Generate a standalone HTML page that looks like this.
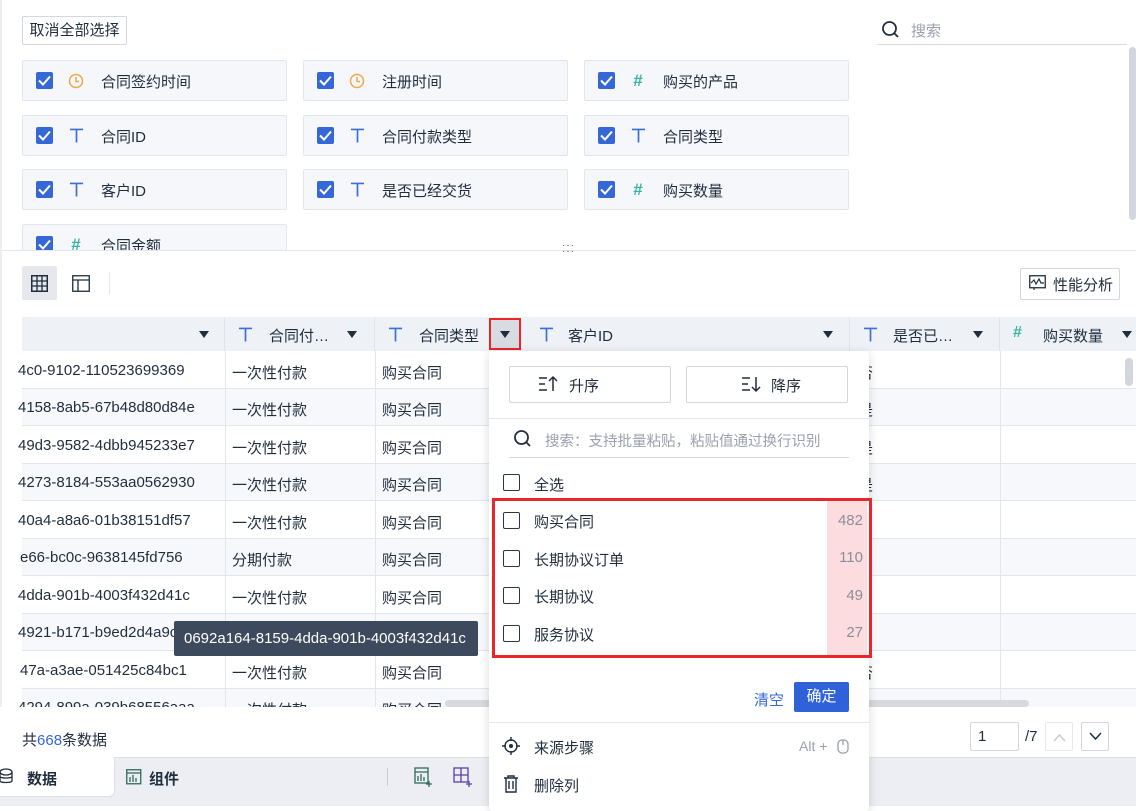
<!DOCTYPE html>
<html><head><meta charset="utf-8">
<style>
*{box-sizing:border-box;margin:0;padding:0}
body{width:1136px;height:806px;position:relative;overflow:hidden;background:#fff;font-family:"Liberation Sans","Noto Sans CJK SC",sans-serif;font-size:15px;color:#1f2d3d}
.a{position:absolute}
.card{position:absolute;width:265px;height:41px;background:#f5f7fb;border:1px solid #e3e6ec;border-radius:2px}
.cb{position:absolute;left:13px;top:11px;width:17px;height:17px;background:#3567d6;border-radius:2px}
.cb svg{position:absolute;left:2px;top:3px}
.ic{position:absolute;left:44px;top:10px;width:18px;height:20px;font-size:17px;text-align:center}
.lbl{position:absolute;left:78px;top:10px;font-size:15px}
.hash{color:#3bb5a3;font-weight:bold}
.th{position:absolute;top:317px;height:34px;background:#eef1f6;border-right:1px solid #dfe3ea;font-size:15px}
.row{position:absolute;left:22px;width:1114px;height:37.5px;border-bottom:1px solid #e3e6ec}
.cell{position:absolute;top:10px;white-space:nowrap;font-size:15px}
.arr{position:absolute;top:14px;width:0;height:0;border-left:5px solid transparent;border-right:5px solid transparent;border-top:7px solid #1f2d3d}
.vl{position:absolute;top:351px;height:356px;width:1px;background:#e3e6ec}
.chk{position:absolute;left:14px;width:17px;height:17px;border:1.5px solid #2b3648;border-radius:2px}
.ti{position:absolute}
</style></head><body>
<svg width="0" height="0" style="position:absolute"><defs><symbol id="T" viewBox="0 0 16 16"><path d="M1 1.5h14M8 1.5v14" stroke="#3b6fd8" stroke-width="1.8" fill="none"/></symbol></defs></svg>
<div class="a" style="left:0;top:0;width:2px;height:757px;background:#eceef2"></div>
<!-- top panel -->
<div class="a" style="left:22px;top:16px;width:105px;height:29px;border:1px solid #d3d7de;border-radius:2px;font-size:15px;line-height:27px;text-align:center">取消全部选择</div>
<svg class="a" style="left:881px;top:20px" width="20" height="20" viewBox="0 0 20 20"><circle cx="8.5" cy="8.5" r="6.5" fill="none" stroke="#1f2d3d" stroke-width="1.8"/><line x1="13" y1="13" x2="17" y2="17" stroke="#1f2d3d" stroke-width="1.8"/></svg>
<div class="a" style="left:911px;top:20px;color:#9aa1ad">搜索</div>
<div class="a" style="left:877px;top:44px;width:250px;height:1px;background:#d9dce3"></div>
<div class="a" style="left:1129px;top:47px;width:7px;height:173px;background:#d3d6dc;border-radius:4px"></div>

<div class="card" style="left:22px;top:60px"><div class="cb"><svg width="13" height="11"><path d="M1 5.5l4 4L12 1.5" fill="none" stroke="#fff" stroke-width="2"/></svg></div><svg class="ic" viewBox="0 0 18 20"><circle cx="9" cy="10" r="6.5" fill="none" stroke="#f0a94a" stroke-width="1.5"/><path d="M9 6v4.5h3" fill="none" stroke="#f0a94a" stroke-width="1.5"/></svg><div class="lbl">合同签约时间</div></div>
<div class="card" style="left:303px;top:60px"><div class="cb"><svg width="13" height="11"><path d="M1 5.5l4 4L12 1.5" fill="none" stroke="#fff" stroke-width="2"/></svg></div><svg class="ic" viewBox="0 0 18 20"><circle cx="9" cy="10" r="6.5" fill="none" stroke="#f0a94a" stroke-width="1.5"/><path d="M9 6v4.5h3" fill="none" stroke="#f0a94a" stroke-width="1.5"/></svg><div class="lbl">注册时间</div></div>
<div class="card" style="left:584px;top:60px"><div class="cb"><svg width="13" height="11"><path d="M1 5.5l4 4L12 1.5" fill="none" stroke="#fff" stroke-width="2"/></svg></div><div class="ic hash">#</div><div class="lbl">购买的产品</div></div>

<div class="card" style="left:22px;top:115px"><div class="cb"><svg width="13" height="11"><path d="M1 5.5l4 4L12 1.5" fill="none" stroke="#fff" stroke-width="2"/></svg></div><svg class="ti" style="left:46px;top:12px" width="15" height="15"><use href="#T"/></svg><div class="lbl">合同ID</div></div>
<div class="card" style="left:303px;top:115px"><div class="cb"><svg width="13" height="11"><path d="M1 5.5l4 4L12 1.5" fill="none" stroke="#fff" stroke-width="2"/></svg></div><svg class="ti" style="left:46px;top:12px" width="15" height="15"><use href="#T"/></svg><div class="lbl">合同付款类型</div></div>
<div class="card" style="left:584px;top:115px"><div class="cb"><svg width="13" height="11"><path d="M1 5.5l4 4L12 1.5" fill="none" stroke="#fff" stroke-width="2"/></svg></div><svg class="ti" style="left:46px;top:12px" width="15" height="15"><use href="#T"/></svg><div class="lbl">合同类型</div></div>

<div class="card" style="left:22px;top:169px"><div class="cb"><svg width="13" height="11"><path d="M1 5.5l4 4L12 1.5" fill="none" stroke="#fff" stroke-width="2"/></svg></div><svg class="ti" style="left:46px;top:12px" width="15" height="15"><use href="#T"/></svg><div class="lbl">客户ID</div></div>
<div class="card" style="left:303px;top:169px"><div class="cb"><svg width="13" height="11"><path d="M1 5.5l4 4L12 1.5" fill="none" stroke="#fff" stroke-width="2"/></svg></div><svg class="ti" style="left:46px;top:12px" width="15" height="15"><use href="#T"/></svg><div class="lbl">是否已经交货</div></div>
<div class="card" style="left:584px;top:169px"><div class="cb"><svg width="13" height="11"><path d="M1 5.5l4 4L12 1.5" fill="none" stroke="#fff" stroke-width="2"/></svg></div><div class="ic hash">#</div><div class="lbl">购买数量</div></div>

<div class="a" style="left:0;top:224px;width:1136px;height:26px;overflow:hidden">
<div class="card" style="left:22px;top:0"><div class="cb"><svg width="13" height="11"><path d="M1 5.5l4 4L12 1.5" fill="none" stroke="#fff" stroke-width="2"/></svg></div><div class="ic hash">#</div><div class="lbl">合同金额</div></div>
</div>
<div class="a" style="left:2px;top:250px;width:1134px;height:1px;background:#e3e6ec"></div>
<div class="a" style="left:562px;top:243px;font-size:10px;letter-spacing:1px;color:#555;line-height:6px">···<br>···</div>

<!-- toolbar -->
<div class="a" style="left:22px;top:266px;width:35px;height:34px;background:#e6e8ee;border-radius:2px"></div>
<svg class="a" style="left:31px;top:275px" width="17" height="17"><rect x="0.75" y="0.75" width="15.5" height="15.5" fill="none" stroke="#1f2d3d" stroke-width="1.5"/><path d="M6 1v15M11 1v15M1 6h15M1 11h15" stroke="#1f2d3d" stroke-width="1.3"/></svg>
<svg class="a" style="left:72px;top:275px" width="18" height="17"><rect x="0.75" y="0.75" width="16.5" height="15.5" fill="none" stroke="#1f2d3d" stroke-width="1.3"/><path d="M1 5h16M6 5v11" stroke="#1f2d3d" stroke-width="1.3"/></svg>
<div class="a" style="left:109px;top:272px;width:1px;height:22px;background:#e3e6ec"></div>
<div class="a" style="left:1020px;top:268px;width:100px;height:32px;border:1px solid #d3d7de;border-radius:2px"></div>
<svg class="a" style="left:1029px;top:275px" width="17" height="16"><rect x="0.75" y="0.75" width="15.5" height="12" fill="none" stroke="#1f2d3d" stroke-width="1.3"/><path d="M2 8l3-3 2 4 3-5 2 4h3M5 13v2" fill="none" stroke="#1f2d3d" stroke-width="1.2"/></svg>
<div class="a" style="left:1053px;top:274px">性能分析</div>

<!-- table header -->
<div class="th" style="left:22px;width:203px"><div class="arr" style="left:177px"></div></div>
<div class="th" style="left:225px;width:150px"><svg class="ti" style="left:13px;top:10px" width="15" height="15"><use href="#T"/></svg><div class="cell" style="left:44px;top:8px">合同付…</div><div class="arr" style="left:122px"></div></div>
<div class="th" style="left:375px;width:146px"><svg class="ti" style="left:13px;top:10px" width="15" height="15"><use href="#T"/></svg><div class="cell" style="left:44px;top:8px">合同类型</div></div>
<div class="a" style="left:489px;top:318px;width:32px;height:32px;background:#d8dbe2;border:2px solid #e8262c"><div class="arr" style="left:9px;top:11px"></div></div>
<div class="th" style="left:521px;width:329px"><svg class="ti" style="left:18px;top:10px" width="15" height="15"><use href="#T"/></svg><div class="cell" style="left:47px;top:8px">客户ID</div><div class="arr" style="left:302px"></div></div>
<div class="th" style="left:850px;width:150px"><svg class="ti" style="left:13px;top:10px" width="15" height="15"><use href="#T"/></svg><div class="cell" style="left:43px;top:8px">是否已…</div><div class="arr" style="left:123px"></div></div>
<div class="th" style="left:1000px;width:136px;border-right:none"><div class="cell hash" style="left:13px;top:7px;font-size:16px">#</div><div class="cell" style="left:43px;top:8px">购买数量</div><div class="arr" style="left:122px"></div></div>

<!-- rows -->
<div class="a" style="left:0;top:351px;width:1136px;height:356px;overflow:hidden">
<div class="row" style="top:0;background:#fff"></div>
<div class="row" style="top:37.5px;background:#f7f8fb"></div>
<div class="row" style="top:75px;background:#fff"></div>
<div class="row" style="top:112.5px;background:#f7f8fb"></div>
<div class="row" style="top:150px;background:#fff"></div>
<div class="row" style="top:187.5px;background:#f7f8fb"></div>
<div class="row" style="top:225px;background:#fff"></div>
<div class="row" style="top:262.5px;background:#f7f8fb"></div>
<div class="row" style="top:300px;background:#fff"></div>
<div class="row" style="top:337.5px;background:#f7f8fb"></div>
</div>
<div class="vl" style="left:225px"></div><div class="vl" style="left:375px"></div><div class="vl" style="left:850px"></div><div class="vl" style="left:1000px"></div>
<div class="a" style="left:0;top:351px;width:489px;height:356px;overflow:hidden">
<div class="cell" style="left:18px;top:11px">4c0-9102-110523699369</div>
<div class="cell" style="left:18px;top:48px">4158-8ab5-67b48d80d84e</div>
<div class="cell" style="left:18px;top:86px">49d3-9582-4dbb945233e7</div>
<div class="cell" style="left:18px;top:123px">4273-8184-553aa0562930</div>
<div class="cell" style="left:18px;top:161px">40a4-a8a6-01b38151df57</div>
<div class="cell" style="left:20px;top:198px">e66-bc0c-9638145fd756</div>
<div class="cell" style="left:18px;top:236px">4dda-901b-4003f432d41c</div>
<div class="cell" style="left:18px;top:273px">4921-b171-b9ed2d4a9c</div>
<div class="cell" style="left:20px;top:311px">47a-a3ae-051425c84bc1</div>
<div class="cell" style="left:18px;top:348px">4294-899a-039b68556aaa</div>
<div class="cell" style="left:232px;top:11px">一次性付款</div><div class="cell" style="left:382px;top:11px">购买合同</div>
<div class="cell" style="left:232px;top:48px">一次性付款</div><div class="cell" style="left:382px;top:48px">购买合同</div>
<div class="cell" style="left:232px;top:86px">一次性付款</div><div class="cell" style="left:382px;top:86px">购买合同</div>
<div class="cell" style="left:232px;top:123px">一次性付款</div><div class="cell" style="left:382px;top:123px">购买合同</div>
<div class="cell" style="left:232px;top:161px">一次性付款</div><div class="cell" style="left:382px;top:161px">购买合同</div>
<div class="cell" style="left:232px;top:198px">分期付款</div><div class="cell" style="left:382px;top:198px">购买合同</div>
<div class="cell" style="left:232px;top:236px">一次性付款</div><div class="cell" style="left:382px;top:236px">购买合同</div>
<div class="cell" style="left:232px;top:311px">一次性付款</div><div class="cell" style="left:382px;top:311px">购买合同</div>
<div class="cell" style="left:232px;top:348px">一次性付款</div><div class="cell" style="left:382px;top:348px">购买合同</div>
</div>
<div class="a" style="left:0;top:351px;width:1136px;height:356px;overflow:hidden;clip-path:inset(0 0 0 869px)">
<div class="cell" style="left:858px;top:11px">否</div><div class="cell" style="left:858px;top:48px">是</div><div class="cell" style="left:858px;top:86px">是</div><div class="cell" style="left:858px;top:123px">是</div><div class="cell" style="left:858px;top:311px">否</div>
</div>
<div class="a" style="left:1125px;top:358px;width:8px;height:28px;background:#d3d6dc;border-radius:4px"></div>
<div class="a" style="left:445px;top:700px;width:584px;height:7px;background:#d7d9df;border-radius:4px"></div>
<div class="a" style="left:0;top:707px;width:1136px;height:50px;background:#fff"></div>

<!-- tooltip -->
<div class="a" style="left:174px;top:621px;width:304px;height:35px;background:#3d4a5e;border-radius:2px;color:#fff;font-size:15px;line-height:35px;padding-left:10px;white-space:nowrap">0692a164-8159-4dda-901b-4003f432d41c</div>

<!-- footer -->
<div class="a" style="left:22px;top:729px">共<span style="color:#3567d6">668</span>条数据</div>
<div class="a" style="left:970px;top:722px;width:49px;height:29px;border:1px solid #d3d7de;border-radius:2px;padding:5px 7px">1</div>
<div class="a" style="left:1025px;top:728px">/7</div>
<div class="a" style="left:1045px;top:722px;width:28px;height:29px;border:1px solid #e6e8ec;border-radius:2px"><svg style="position:absolute;left:7px;top:10px" width="13" height="9"><path d="M1 8l5.5-6L12 8" fill="none" stroke="#c9ccd3" stroke-width="1.5"/></svg></div>
<div class="a" style="left:1081px;top:722px;width:28px;height:29px;border:1px solid #d3d7de;border-radius:2px"><svg style="position:absolute;left:7px;top:9px" width="13" height="9"><path d="M1 1l5.5 6L12 1" fill="none" stroke="#1f2d3d" stroke-width="1.5"/></svg></div>

<!-- bottom bar -->
<div class="a" style="left:0;top:757px;width:1136px;height:49px;background:#eceef3;border-top:1px solid #dde0e6"></div>
<div class="a" style="left:0;top:757px;width:115px;height:40px;background:#fff;border-radius:0 0 6px 0;border-right:1px solid #dde0e6;border-bottom:1px solid #dde0e6"></div>
<svg class="a" style="left:0;top:768px" width="14" height="17"><ellipse cx="6" cy="4" rx="6" ry="3" fill="none" stroke="#1f2d3d" stroke-width="1.3"/><path d="M0 4v9c0 2 12 2 12 0V4M0 8.5c0 2 12 2 12 0" fill="none" stroke="#1f2d3d" stroke-width="1.3"/></svg>
<div class="a" style="left:27px;top:768px;font-weight:bold">数据</div>
<svg class="a" style="left:126px;top:769px" width="16" height="16"><rect x="0.75" y="0.75" width="14" height="14" fill="none" stroke="#2d6b5a" stroke-width="1.3"/><path d="M1 4h14M4 13V8M7 13V6M10 13V9" stroke="#2d6b5a" stroke-width="1.3"/></svg>
<div class="a" style="left:149px;top:768px;font-weight:bold">组件</div>
<div class="a" style="left:387px;top:768px;width:1px;height:18px;background:#c8ccd4"></div>
<svg class="a" style="left:414px;top:767px" width="20" height="20"><rect x="1" y="1" width="13" height="15" fill="none" stroke="#2d6b5a" stroke-width="1.3"/><path d="M1 5h13M4 14v-5M7 14v-7M10 14v-4M15 14v6M12 17h6" stroke="#2d6b5a" stroke-width="1.3"/></svg>
<svg class="a" style="left:453px;top:767px" width="20" height="20"><rect x="1" y="1" width="14" height="14" fill="none" stroke="#5a3ea8" stroke-width="1.3"/><path d="M1 8h14M8 1v14M16 14v6M13 17h6" stroke="#5a3ea8" stroke-width="1.3"/></svg>

<!-- dropdown -->
<div class="a" style="left:489px;top:351px;width:380px;height:460px;background:#fff;border-radius:4px;box-shadow:0 2px 10px rgba(0,0,0,0.15)">
<div class="a" style="left:20px;top:15px;width:162px;height:37px;border:1px solid #d3d7de;border-radius:2px"></div>
<svg class="a" style="left:49px;top:24px" width="20" height="18"><path d="M1 3h8M1 9h6M1 15h8M15 16V2M11 6l4-4 4 4" fill="none" stroke="#1f2d3d" stroke-width="1.5"/></svg>
<div class="a" style="left:80px;top:24px">升序</div>
<div class="a" style="left:197px;top:15px;width:162px;height:37px;border:1px solid #d3d7de;border-radius:2px"></div>
<svg class="a" style="left:252px;top:24px" width="20" height="18"><path d="M1 3h8M1 9h6M1 15h8M15 2v14M11 12l4 4 4-4" fill="none" stroke="#1f2d3d" stroke-width="1.5"/></svg>
<div class="a" style="left:282px;top:24px">降序</div>
<div class="a" style="left:0;top:67px;width:380px;height:1px;background:#e3e6ec"></div>
<svg class="a" style="left:24px;top:78px" width="20" height="20"><circle cx="8.5" cy="8.5" r="6.5" fill="none" stroke="#1f2d3d" stroke-width="1.8"/><line x1="13" y1="13" x2="17" y2="17" stroke="#1f2d3d" stroke-width="1.8"/></svg>
<div class="a" style="left:56px;top:79px;color:#9aa1ad;font-size:14.5px;white-space:nowrap">搜索：支持批量粘贴，粘贴值通过换行识别</div>
<div class="a" style="left:20px;top:106px;width:340px;height:1px;background:#d3d7de"></div>
<div class="chk" style="top:123px"></div><div class="a" style="left:45px;top:123px">全选</div>
<div class="a" style="left:338px;top:149px;width:40px;height:156px;background:#fddcdf"></div>
<div class="chk" style="top:161px"></div><div class="a" style="left:45px;top:160px">购买合同</div><div class="a" style="right:6px;top:161px;color:#8a8f99">482</div>
<div class="chk" style="top:199px"></div><div class="a" style="left:45px;top:198px">长期协议订单</div><div class="a" style="right:6px;top:198px;color:#8a8f99">110</div>
<div class="chk" style="top:236px"></div><div class="a" style="left:45px;top:235px">长期协议</div><div class="a" style="right:6px;top:236px;color:#8a8f99">49</div>
<div class="chk" style="top:274px"></div><div class="a" style="left:45px;top:273px">服务协议</div><div class="a" style="right:6px;top:273px;color:#8a8f99">27</div>
<div class="a" style="left:265px;top:338px;color:#3567d6">清空</div>
<div class="a" style="left:305px;top:331px;width:55px;height:30px;background:#2f62d8;border-radius:2px;color:#fff;text-align:center;line-height:30px">确定</div>
<div class="a" style="left:0;top:371px;width:380px;height:1px;background:#e3e6ec"></div>
<svg class="a" style="left:13px;top:386px" width="18" height="18"><circle cx="9" cy="9" r="6" fill="none" stroke="#1f2d3d" stroke-width="1.4"/><circle cx="9" cy="9" r="2" fill="#1f2d3d"/><path d="M9 0v4M9 14v4M0 9h4M14 9h4" stroke="#1f2d3d" stroke-width="1.4"/></svg>
<div class="a" style="left:45px;top:386px">来源步骤</div>
<div class="a" style="left:310px;top:387px;color:#9aa1ad;font-size:14px">Alt +</div>
<svg class="a" style="left:348px;top:386px" width="12" height="17"><rect x="1" y="3" width="10" height="13" rx="4" fill="none" stroke="#9aa1ad" stroke-width="1.3"/><path d="M6 3v5" stroke="#9aa1ad" stroke-width="1.3"/></svg>
<svg class="a" style="left:14px;top:424px" width="16" height="18"><path d="M1 3h14M5 3V1h6v2M3 3v14h10V3M6 6v8M10 6v8" fill="none" stroke="#1f2d3d" stroke-width="1.4"/></svg>
<div class="a" style="left:45px;top:424px">删除列</div>
</div>
<div class="a" style="left:492px;top:498px;width:380px;height:160px;border:3px solid #e8262c"></div>
</body></html>
